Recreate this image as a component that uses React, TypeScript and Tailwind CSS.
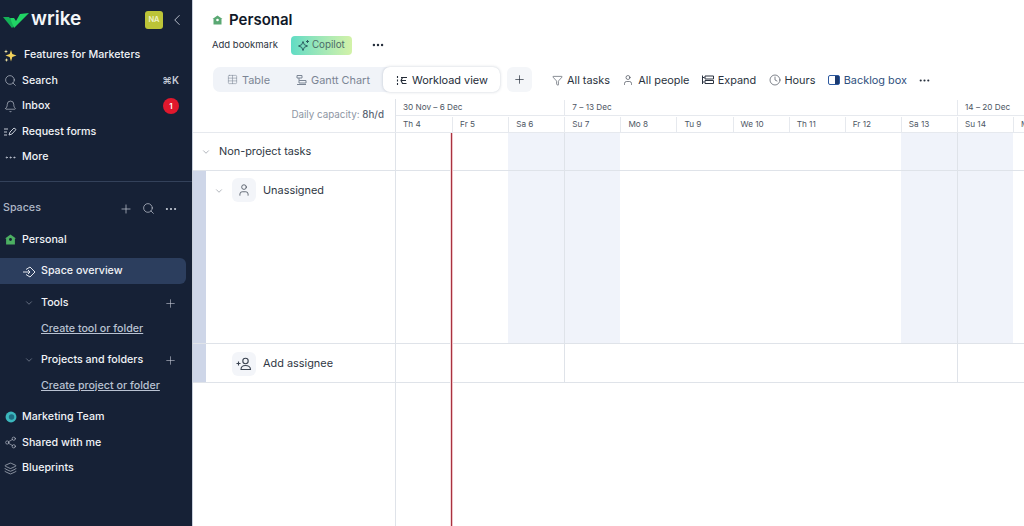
import React from "react";
import { Search, Bell, MoreHorizontal, ChevronLeft, ChevronDown, Plus, Share2, Layers, User, Filter, Clock, Table } from "lucide-react";

const font = { fontFamily: "Inter, 'Noto Sans', sans-serif" };

function Side({ icon, children, right }: { icon?: React.ReactNode; children: React.ReactNode; right?: React.ReactNode }) {
  return (
    <div className="flex items-center h-[25.5px] pl-[4px] pr-[13px] text-[10.7px] font-medium text-[#f1f3f7]">
      <span className="w-[18px] flex items-center justify-start shrink-0">{icon}</span>
      <span className="flex-1 truncate">{children}</span>
      {right}
    </div>
  );
}

function Logo() {
  return (
    <svg width="26" height="16" viewBox="0 0 26 16">
      <path d="M0 5 L6 5 L12 13 L9 16 Z" fill="#14b057" />
      <path d="M7 6 L11 6 L13 9 L17 2 L26 1 L11 16 Z" fill="#20d464" />
    </svg>
  );
}

function Star({ color, size = 12 }: { color: string; size?: number }) {
  return (
    <svg width={size} height={size} viewBox="0 0 12 12" fill="none" stroke={color} strokeWidth="1">
      <path d="M5 2.500 L6.300 5.700 L9.500 7 L6.300 8.300 L5 11.500 L3.700 8.300 L0.500 7 L3.700 5.700 Z" />
      <path d="M9.500 1v3M8 2.500h3" />
    </svg>
  );
}

const days = ["Th 4", "Fr 5", "Sa 6", "Su 7", "Mo 8", "Tu 9", "We 10", "Th 11", "Fr 12", "Sa 13", "Su 14", "M"];
const weekend = [2, 3, 9, 10];
const weekStart = [3, 10];

function Cells({ shade }: { shade: boolean }) {
  return (
    <div className="flex flex-1 min-w-0">
      {days.map((d, i) => (
        <div
          key={d}
          className={`w-[56.1px] shrink-0 ${shade && weekend.includes(i) ? "bg-[#f0f3fa]" : ""} ${weekStart.includes(i) ? "border-l border-[#dfe3e9]" : ""}`}
        />
      ))}
    </div>
  );
}

function Tool({ icon, children, cls = "text-[#2b3340]" }: { icon: React.ReactNode; children: React.ReactNode; cls?: string }) {
  return (
    <div className={`flex items-center gap-[4px] text-[10.9px] ${cls}`}>
      {icon}
      <span>{children}</span>
    </div>
  );
}

export default function App() {
  return (
    <div style={font} className="flex h-[526px] w-[1024px] overflow-hidden bg-white">
      <aside className="w-[193px] shrink-0 bg-[#162136] flex flex-col border-r border-[#c9d0dc]">
        <div className="flex items-center h-[42px] pl-[3px] pr-[6px] pb-[3px]">
          <Logo />
          <span className="ml-[2px] text-[19px] leading-none font-semibold text-[#f4f6f8] flex-1 -mt-[2px]">wrike</span>
          <span className="w-[18px] h-[18px] rounded-[3px] bg-[#bcc438] text-[7.5px] font-semibold text-[#eef2c8] flex items-center justify-center">NA</span>
          <ChevronLeft size={18} strokeWidth={1.2} className="ml-[5px] text-[#c5cbd6]" />
        </div>
        <div className="h-[26px] flex items-center pl-[4px] text-[10.7px] font-medium text-[#f1f3f7]">
          <svg width="13" height="13" viewBox="0 0 13 13" className="mr-[7px]">
            <path d="M7 1 L8.300 5 L12.500 6.500 L8.300 8 L7 12.500 L5.700 8 L1.500 6.500 L5.700 5 Z" fill="#f3d35c" />
            <path d="M2 0.500 L2.500 2 L4 2.500 L2.500 3 L2 4.500 L1.500 3 L0 2.500 L1.500 2 Z" fill="#f7e9a8" />
            <path d="M2.500 9 L3 10.500 L4.500 11 L3 11.500 L2.500 13 L2 11.500 L0.500 11 L2 10.500 Z" fill="#f7e9a8" />
          </svg>
          <span>Features for Marketers</span>
        </div>
        <Side icon={<Search size={13} strokeWidth={1.2} className="text-[#c5cbd6]" />} right={<span className="text-[10px] font-semibold text-[#c5cbd6]">⌘K</span>}>Search</Side>
        <Side icon={<Bell size={13} strokeWidth={1.2} className="text-[#c5cbd6]" />} right={<span className="w-[16px] h-[16px] rounded-full bg-[#e0182d] text-white text-[8px] font-semibold flex items-center justify-center">1</span>}>Inbox</Side>
        <Side
          icon={
            <svg width="13" height="12" viewBox="0 0 13 12" fill="none" stroke="#c5cbd6" strokeWidth="1">
              <path d="M0 3h4M0 6h3M0 9h3M5 9l1-3 4-4 2 1.500-4 4.500z" />
            </svg>
          }
        >
          Request forms
        </Side>
        <Side icon={<MoreHorizontal size={13} strokeWidth={1.6} className="text-[#c5cbd6]" />}>More</Side>
        <div className="mt-[11px] h-px bg-[#33415a]" />
        <div className="flex items-center h-[25px] mt-[14px] pl-[3px] pr-[14px] text-[10.7px] font-medium text-[#aeb7c6]">
          <span className="flex-1">Spaces</span>
          <div className="flex items-center gap-[9px] text-[#c5cbd6]">
            <Plus size={14} strokeWidth={1.2} />
            <Search size={13} strokeWidth={1.3} />
            <MoreHorizontal size={14} strokeWidth={1.8} />
          </div>
        </div>
        <div className="mt-[6px]">
          <Side
            icon={
              <svg width="11" height="11" viewBox="0 0 10 10" className="ml-[1px]">
                <path d="M5 0.500 L10 4 L9 4 V9.500 H1 V4 H0 Z" fill="#4caf62" />
                <circle cx="5" cy="5" r="1.300" fill="#162136" />
              </svg>
            }
          >
            Personal
          </Side>
        </div>
        <div className="mt-[5px] h-[26px] w-[186px] rounded-r-[6px] bg-[#2c3e5e] flex items-center pl-[22px] pt-[2px] text-[10.7px] font-medium text-[#f1f3f7]">
          <svg width="14" height="12" viewBox="0 0 14 12" fill="none" stroke="#e6e9ef" strokeWidth="1" className="mr-[5px]">
            <path d="M1 6h7M6 4l2 2-2 2M4 3.500 L8 1 L13 6 L8 11 L4 8.500" />
          </svg>
          Space overview
        </div>
        <div className="mt-[7px] flex items-center h-[25.5px] pl-[24px] pr-[15px] text-[10.7px] font-medium text-[#f1f3f7]">
          <ChevronDown size={10} strokeWidth={1.2} className="text-[#aeb7c6] mr-[7px]" />
          <span className="flex-1">Tools</span>
          <Plus size={13} strokeWidth={1.1} className="text-[#c5cbd6]" />
        </div>
        <div className="h-[25.5px] flex items-center pl-[41px] text-[10.7px] font-medium text-[#b9c2d2] underline">Create tool or folder</div>
        <div className="mt-[6px] flex items-center h-[25.5px] pl-[24px] pr-[15px] text-[10.7px] font-medium text-[#f1f3f7]">
          <ChevronDown size={10} strokeWidth={1.2} className="text-[#aeb7c6] mr-[7px]" />
          <span className="flex-1">Projects and folders</span>
          <Plus size={13} strokeWidth={1.1} className="text-[#c5cbd6]" />
        </div>
        <div className="h-[25.5px] flex items-center pl-[41px] text-[10.7px] font-medium text-[#b9c2d2] underline">Create project or folder</div>
        <div className="mt-[6px]">
          <Side
            icon={
              <svg width="12" height="12" viewBox="0 0 11 11" className="ml-[1px]">
                <circle cx="5.500" cy="5.500" r="5" fill="#3bb7bd" />
                <circle cx="6" cy="5.500" r="2.500" fill="#1e6e83" />
              </svg>
            }
          >
            Marketing Team
          </Side>
          <Side icon={<Share2 size={13} strokeWidth={1.1} className="text-[#c5cbd6]" />}>Shared with me</Side>
          <Side icon={<Layers size={13} strokeWidth={1.2} className="text-[#c5cbd6]" />}>Blueprints</Side>
        </div>
      </aside>

      <main className="flex-1 min-w-0 flex flex-col relative">
        <div className="h-[67px] pl-[19px] shrink-0">
          <div className="flex items-center h-[20px] mt-[10px]">
            <svg width="11" height="10" viewBox="0 0 10 10" className="mr-[6px]">
              <path d="M5 0.500 L10 4 L9 4 V9.500 H1 V4 H0 Z" fill="#5aa873" />
              <circle cx="5" cy="5" r="1.300" fill="#fff" />
            </svg>
            <span className="text-[15px] font-semibold text-[#101828]">Personal</span>
          </div>
          <div className="flex items-center mt-[5px] h-[20px]">
            <span className="text-[9.5px] text-[#2b3340]">Add bookmark</span>
            <span className="ml-[13px] h-[19px] w-[61px] rounded-[4px] bg-gradient-to-r from-[#5fdcc4] to-[#d3f2a8] flex items-center justify-center gap-[2px] text-[9.8px] text-[#4c6b68]">
              <Star color="#2d5f63" />
              Copilot
            </span>
            <MoreHorizontal size={14} strokeWidth={2.2} className="ml-[19px] text-[#27303d]" />
          </div>
        </div>

        <div className="flex items-center h-[25px] pl-[20px] shrink-0">
          <div className="flex items-center h-[25px] w-[287px] rounded-[7px] bg-[#f0f3f8] text-[10.9px] text-[#7b8594]">
            <div className="flex items-center pl-[14px] w-[71px] gap-[4px] pt-[1px]">
              <Table size={11} strokeWidth={1.2} />
              Table
            </div>
            <div className="flex items-center w-[99px] gap-[4px] pl-[12px] pt-[1px]">
              <svg width="11" height="11" viewBox="0 0 11 11" fill="none" stroke="#7b8594" strokeWidth="1">
                <path d="M1 1.500h5v2.500h-5zM3 4v2.500h7V9H3V6.500M1 10.500h9" />
              </svg>
              Gantt Chart
            </div>
            <div className="flex items-center h-[25px] w-[117px] rounded-[7px] bg-white shadow-[0_0_3px_rgba(40,60,90,0.25)] pl-[13px] pt-[1px] gap-[4px] text-[#242c38]">
              <svg width="12" height="11" viewBox="0 0 12 11" fill="none" stroke="#242c38" strokeWidth="1.100">
                <path d="M1.500 1v2M1.500 4.500v2M1.500 8v2M5 2.500h6M6.500 2.500l-1.500 3 1.500 3h4M5 5.500h5" />
              </svg>
              Workload view
            </div>
          </div>
          <div className="ml-[7px] w-[25px] h-[25px] rounded-[6px] bg-[#f4f6f9] flex items-center justify-center">
            <Plus size={13} strokeWidth={1.3} className="text-[#27303d]" />
          </div>
          <div className="ml-[20px] pt-[2px] flex items-center gap-[12.3px]">
            <Tool icon={<Filter size={11} strokeWidth={1.2} className="text-[#2b3340]" />}>All tasks</Tool>
            <Tool icon={<User size={12} strokeWidth={1.2} className="text-[#2b3340]" />}>All people</Tool>
            <Tool
              icon={
                <svg width="12" height="10" viewBox="0 0 12 10" fill="none" stroke="#2b3340" strokeWidth="1">
                  <path d="M0.500 0.500V9M0.500 2.500h2M0.500 7h2M3 1h8.500v3H3zM3 5.500h8.500v3H3z" />
                </svg>
              }
            >
              Expand
            </Tool>
            <Tool icon={<Clock size={12} strokeWidth={1.2} className="text-[#2b3340]" />}>Hours</Tool>
            <Tool
              cls="text-[#2e4f7d]"
              icon={
                <svg width="12" height="10" viewBox="0 0 12 10">
                  <rect x="0.500" y="0.500" width="11" height="9" rx="1.500" fill="none" stroke="#2e5aa0" />
                  <rect x="7" y="1" width="4" height="8" fill="#1c3b70" />
                </svg>
              }
            >
              Backlog box
            </Tool>
            <MoreHorizontal size={13} strokeWidth={2} className="text-[#27303d] -ml-[1px]" />
          </div>
        </div>

        <div className="mt-[7px] flex h-[34px] shrink-0 border-b border-[#e6e9ee]">
          <div className="w-[202px] shrink-0 flex items-center justify-end pr-[11px] text-[9.8px] text-[#8d96a3]">
            Daily capacity:&nbsp;<span className="font-medium text-[#5b6573]">8h/d</span>
          </div>
          <div className="flex-1 min-w-0 flex flex-col border-l border-[#dfe3e9]">
            <div className="h-[17px] pt-[1px] flex border-b border-[#e6e9ee] text-[8.2px] text-[#4d5663]">
              <div className="w-[168.3px] shrink-0 pl-[7px] flex items-center">30 Nov – 6 Dec</div>
              <div className="w-[392.7px] shrink-0 pl-[7px] flex items-center border-l border-[#e6e9ee]">7 – 13 Dec</div>
              <div className="flex-1 pl-[7px] flex items-center border-l border-[#e6e9ee] whitespace-nowrap">14 – 20 Dec</div>
            </div>
            <div className="flex-1 pt-[1px] flex text-[8.2px] text-[#4d5663] overflow-hidden">
              {days.map((d, i) => (
                <div key={d} className={`w-[56.1px] shrink-0 pl-[7px] flex items-center ${i > 0 ? "border-l border-[#e6e9ee]" : ""}`}>
                  {d}
                </div>
              ))}
            </div>
          </div>
        </div>

        <div className="flex h-[38px] shrink-0 border-b border-[#dfe3e9]">
          <div className="w-[202px] shrink-0 flex items-center pl-[8px] text-[10.9px] text-[#2f3744]">
            <ChevronDown size={10} strokeWidth={1.3} className="text-[#6f7885] mr-[8px]" />
            Non-project tasks
          </div>
          <div className="flex-1 min-w-0 flex border-l border-[#dfe3e9] overflow-hidden">
            <Cells shade />
          </div>
        </div>

        <div className="flex h-[173px] shrink-0 border-b border-[#dfe3e9]">
          <div className="w-[202px] shrink-0 flex">
            <div className="w-[13px] bg-[#ced6e8]" />
            <div className="flex items-start pl-[8px] pt-[7px]">
              <ChevronDown size={10} strokeWidth={1.3} className="text-[#6f7885] mt-[8px] mr-[8px]" />
              <div className="w-[24px] h-[24px] rounded-[6px] bg-[#f3f5f9] flex items-center justify-center">
                <User size={14} strokeWidth={1.3} className="text-[#3a4350]" />
              </div>
              <span className="ml-[7px] mt-[4px] text-[10.9px] text-[#2f3744]">Unassigned</span>
            </div>
          </div>
          <div className="flex-1 min-w-0 flex border-l border-[#dfe3e9] overflow-hidden">
            <Cells shade />
          </div>
        </div>

        <div className="flex h-[39px] shrink-0 border-b border-[#dfe3e9]">
          <div className="w-[202px] shrink-0 flex">
            <div className="w-[13px] bg-[#ced6e8]" />
            <div className="flex items-center pl-[26px] pt-[1px]">
              <div className="w-[24px] h-[24px] rounded-[6px] bg-[#f3f5f9] flex items-center justify-center">
                <svg width="16" height="14" viewBox="0 0 16 14" fill="none" stroke="#3a4350" strokeWidth="1.100">
                  <circle cx="9.500" cy="4" r="2.700" />
                  <path d="M5 12.500 C5 9.500 7 8.500 9.500 8.500 C12 8.500 14.500 9.500 14.500 12.500 Z" />
                  <path d="M0.500 6.500h4M2.500 4.500v4" />
                </svg>
              </div>
              <span className="ml-[7px] text-[10.9px] text-[#2f3744]">Add assignee</span>
            </div>
          </div>
          <div className="flex-1 min-w-0 flex border-l border-[#dfe3e9] overflow-hidden">
            <Cells shade={false} />
          </div>
        </div>

        <div className="flex-1 flex min-h-0">
          <div className="w-[202px] shrink-0" />
          <div className="flex-1 border-l border-[#dfe3e9]" />
        </div>

        <div className="absolute left-[258px] top-[133px] bottom-0 w-px bg-[#a8323f] shadow-[1px_0_0_#efc4c9,-1px_0_0_#f5d6d9]" />
      </main>
    </div>
  );
}
